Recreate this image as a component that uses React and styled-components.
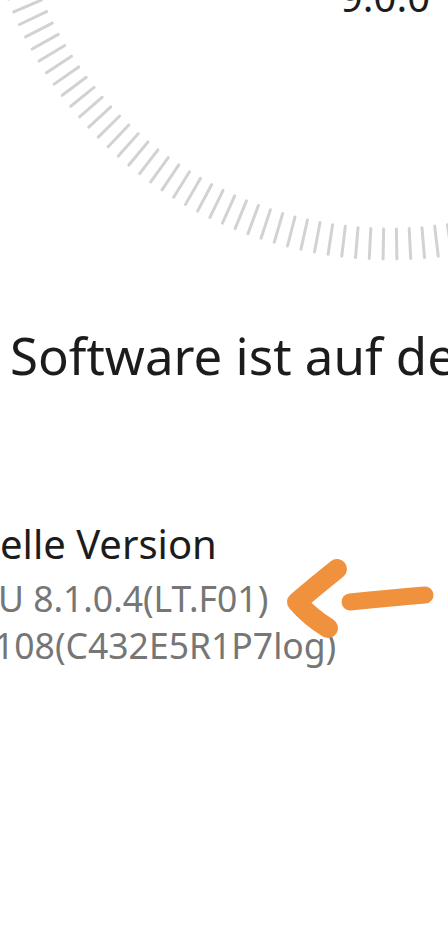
import React from "react";
import styled, { createGlobalStyle } from "styled-components";

const GlobalStyle = createGlobalStyle`
body {
  margin: 0;
  background: #ffffff;
  font-family: "Noto Sans", "Open Sans", sans-serif;
}
`

const Page = styled.div`
width: 448px;
height: 932px;
overflow: hidden;
background: #ffffff;
`

const DialSvg = styled.svg`
display: block;
width: 448px;
height: 270px;
`

const Status = styled.p`
margin: 55px 0 0 0;
padding-left: 10px;
font-size: 51px;
line-height: 60px;
color: #1c1c1c;
white-space: nowrap;
overflow: hidden;
`

const VersionBlock = styled.div`
position: relative;
margin-top: 139px;
`

const Title = styled.div`
font-size: 40px;
line-height: 40px;
margin-bottom: 11px;
color: #1c1c1c;
white-space: nowrap;
`

const Detail = styled.div`
font-size: 35.5px;
line-height: 47px;
color: #767676;
white-space: nowrap;
margin-left: ${(p) => p.$shift || 0}px;
`

const ArrowMark = styled.svg`
position: absolute;
left: 0;
top: 0;
width: 448px;
height: 140px;
pointer-events: none;
`

const CX = 390;
const CY = -151;
const R_OUT = 410;
const R_IN = 380;
const STEP = 1.93;

function Dial() {
    const ticks = [];
    for (let i = -100; i < 100; i++) {
        const a = ((90 + (i + 0.5) * STEP) * Math.PI) / 180;
        const x1 = CX + R_OUT * Math.cos(a);
        const y1 = CY + R_OUT * Math.sin(a);
        const x2 = CX + R_IN * Math.cos(a);
        const y2 = CY + R_IN * Math.sin(a);
        if (y1 < -10 || x1 < -20 || x1 > 470) continue;
        ticks.push(<line key={i} x1={x1} y1={y1} x2={x2} y2={y2} />);
    }
    return (
        <DialSvg viewBox="0 0 448 270">
            <g stroke="#d2d2d2" strokeWidth="3" strokeLinecap="round">{ticks}</g>
            <text x={CX - 5} y="12" textAnchor="middle" fontSize="40" fill="#1c1c1c" fontFamily="Noto Sans, sans-serif">9.0.0</text>
        </DialSvg>
    )
}

function App() {
    return (
        <Page>
            <GlobalStyle />
            <Dial />
            <Status>Software ist auf dem neuesten Stand</Status>
            <VersionBlock>
                <Title>elle Version</Title>
                <Detail $shift={-2}>U 8.1.0.4(LT.F01)</Detail>
                <Detail $shift={-6}>108(C432E5R1P7log)</Detail>
                <ArrowMark viewBox="0 0 448 140">
                    <g fill="none" stroke="#f0913e" strokeLinecap="round" strokeLinejoin="round">
                        <path d="M337 45 Q317 61 297 78 Q310 93 328 104" strokeWidth="20" />
                        <path d="M350 78 Q390 74 425 71" strokeWidth="17" />
                    </g>
                </ArrowMark>
            </VersionBlock>
        </Page>
    )
}

export default App;
